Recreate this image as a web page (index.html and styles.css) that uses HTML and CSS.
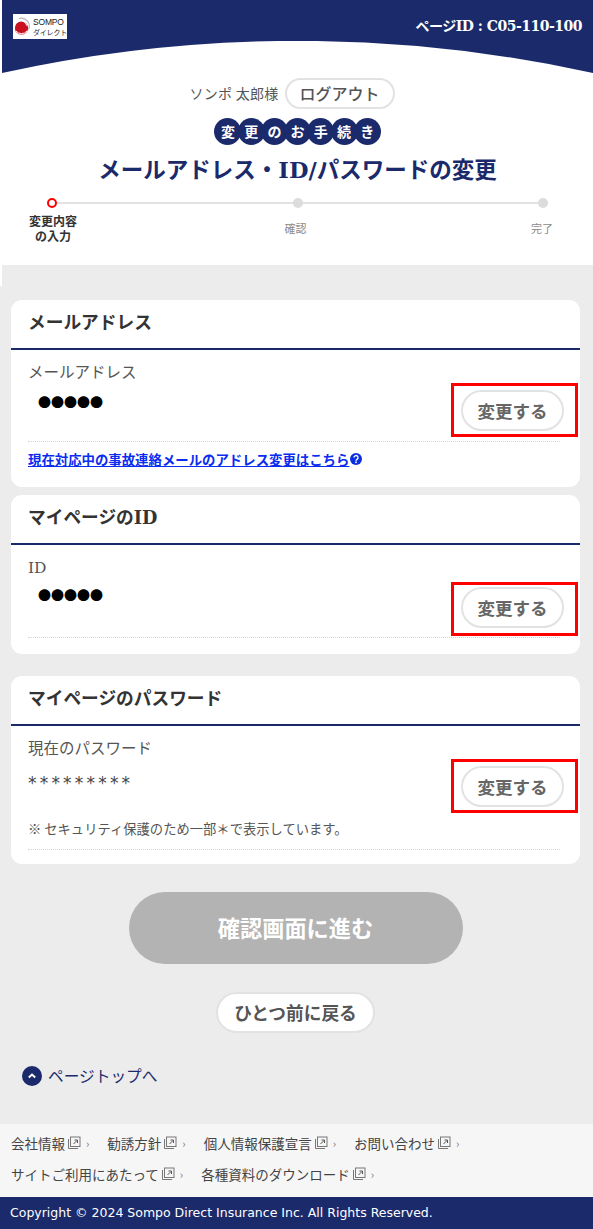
FILE: index.html
```html
<!DOCTYPE html>
<html lang="ja">
<head>
<meta charset="utf-8">
<title>メールアドレス・ID/パスワードの変更</title>
<link rel="stylesheet" href="styles.css">
</head>
<body>
<div class="top">
  <header class="header">
    <div class="header-row">
      <div class="logo">
        <svg class="logo-mark" viewBox="0 0 16 20" width="16" height="20" aria-hidden="true">
          <path d="M5 1.5a8 8 0 0 1 9.5 11" fill="none" stroke="#b5b5b5" stroke-width="1.2"/>
          <circle cx="7.5" cy="11" r="6.6" fill="#c8101e"/>
          <path d="M2 14a7 7 0 0 0 11 0" fill="none" stroke="#ffffff" stroke-width="1"/>
          <path d="M8 3.8a7 7 0 0 1 5 5" fill="none" stroke="#ffffff" stroke-width="1"/>
        </svg>
        <div class="logo-text"><span>SOMPO</span><span class="logo-jp">ダイレクト</span></div>
      </div>
      <div class="page-id">ページ<span class="latin">ID : C05-110-100</span></div>
    </div>
    <svg class="curve" viewBox="0 0 591 32" width="591" height="32" preserveAspectRatio="none" aria-hidden="true">
      <path d="M0 32A1375 1375 0 0 1 591 32Z" fill="#ffffff"/>
    </svg>
  </header>
  <div class="user-row">
    <span class="user-name">ソンポ 太郎様</span>
    <a class="pill-btn logout">ログアウト</a>
  </div>
  <div class="bubbles">
    <span>変</span><span>更</span><span>の</span><span>お</span><span>手</span><span>続</span><span>き</span>
  </div>
  <h1 class="title">メールアドレス・<span class="latin">ID/</span>パスワードの変更</h1>
  <div class="steps">
    <div class="step step-current"><i class="dot"></i><span class="step-label">変更内容<br>の入力</span></div>
    <div class="step step-mid"><i class="dot"></i><span class="step-label">確認</span></div>
    <div class="step step-last"><i class="dot"></i><span class="step-label">完了</span></div>
  </div>
  <div class="top-band"></div>
</div>

<main class="main">
  <section class="card card-mail">
    <h2 class="card-title">メールアドレス</h2>
    <div class="card-body">
      <div class="field">
        <div class="field-info">
          <div class="field-label">メールアドレス</div>
          <div class="masked">●●●●●</div>
        </div>
        <div class="highlight"><a class="pill-btn change">変更する</a></div>
      </div>
      <a class="contact-link">現在対応中の事故連絡メールのアドレス変更はこちら<svg class="help" viewBox="0 0 12 12" width="12" height="12" aria-hidden="true"><circle cx="6" cy="6" r="6" fill="#0b2fe0"/><path d="M4 4.6a2 2 0 1 1 3 1.7c-.7.4-1 .7-1 1.4" fill="none" stroke="#fff" stroke-width="1.4"/><rect x="5.2" y="8.5" width="1.6" height="1.6" fill="#fff"/></svg></a>
    </div>
  </section>

  <section class="card card-id">
    <h2 class="card-title">マイページの<span class="latin">ID</span></h2>
    <div class="card-body">
      <div class="field">
        <div class="field-info">
          <div class="field-label"><span class="latin">ID</span></div>
          <div class="masked">●●●●●</div>
        </div>
        <div class="highlight"><a class="pill-btn change">変更する</a></div>
      </div>
    </div>
  </section>

  <section class="card card-pass">
    <h2 class="card-title">マイページのパスワード</h2>
    <div class="card-body">
      <div class="field">
        <div class="field-info">
          <div class="field-label">現在のパスワード</div>
          <div class="stars">*********</div>
          <div class="note">※ セキュリティ保護のため一部＊で表示しています。</div>
        </div>
        <div class="highlight"><a class="pill-btn change">変更する</a></div>
      </div>
    </div>
  </section>

  <div class="actions">
    <a class="next-btn">確認画面に進む</a>
    <a class="pill-btn back">ひとつ前に戻る</a>
  </div>

  <a class="to-top">
    <svg viewBox="0 0 20 20" width="20" height="20" aria-hidden="true"><circle cx="10" cy="10" r="10" fill="#1b2a6b"/><path d="M6.8 11.6 10 8.6l3.2 3" fill="none" stroke="#fff" stroke-width="2"/></svg>
    ページトップへ
  </a>
</main>

<footer class="footer">
  <nav class="foot-links">
    <div class="foot-row">
      <a>会社情報<svg class="ext" viewBox="0 0 14 14" width="14" height="14" aria-hidden="true"><use href="#ext"/></svg><i class="chev">›</i></a>
      <a>勧誘方針<svg class="ext" viewBox="0 0 14 14" width="14" height="14" aria-hidden="true"><use href="#ext"/></svg><i class="chev">›</i></a>
      <a>個人情報保護宣言<svg class="ext" viewBox="0 0 14 14" width="14" height="14" aria-hidden="true"><use href="#ext"/></svg><i class="chev">›</i></a>
      <a>お問い合わせ<svg class="ext" viewBox="0 0 14 14" width="14" height="14" aria-hidden="true"><use href="#ext"/></svg><i class="chev">›</i></a>
    </div>
    <div class="foot-row">
      <a>サイトご利用にあたって<svg class="ext" viewBox="0 0 14 14" width="14" height="14" aria-hidden="true"><use href="#ext"/></svg><i class="chev">›</i></a>
      <a>各種資料のダウンロード<svg class="ext" viewBox="0 0 14 14" width="14" height="14" aria-hidden="true"><use href="#ext"/></svg><i class="chev">›</i></a>
    </div>
  </nav>
  <div class="copyright">Copyright © 2024 Sompo Direct Insurance Inc. All Rights Reserved.</div>
</footer>

<svg class="defs" width="0" height="0" aria-hidden="true">
  <symbol id="ext" viewBox="0 0 14 14">
    <path d="M1.5 3v9.5H11" fill="none" stroke="#777" stroke-width="1"/>
    <rect x="3.5" y="1" width="9.5" height="9.5" fill="none" stroke="#777" stroke-width="1"/>
    <path d="M6.5 8 10 4.5M7.5 4H10.5V7" fill="none" stroke="#555" stroke-width="1"/>
  </symbol>
</svg>
</body>
</html>
```

FILE: styles.css
```css
* { box-sizing: border-box; }
html, body { margin: 0; padding: 0; }
body {
  background: #ececec;
  color: #444;
  font-family: "Noto Sans CJK JP", "Noto Sans", sans-serif;
  width: 593px;
}
a { color: inherit; text-decoration: none; }
.defs { position: absolute; }
.latin { font-family: "DejaVu Serif", "Noto Sans CJK JP", serif; }

.top {
  background: #fff;
  padding: 0 0 0 2px;
  height: 286px;
  display: flex;
  flex-direction: column;
}
.top-band {
  margin-top: auto;
  height: 21px;
  background: #ececec;
}
.header {
  background: #1b2a6b;
  height: 73px;
  flex: none;
  display: flex;
  flex-direction: column;
  justify-content: space-between;
}
.header-row {
  display: flex;
  justify-content: space-between;
  padding: 14px 11px 0 11px;
}
.curve { display: block; flex: none; }
.logo {
  width: 54px;
  height: 25px;
  background: #fff;
  display: flex;
  align-items: center;
  gap: 3px;
  padding-left: 1px;
}
.logo-text {
  display: flex;
  flex-direction: column;
  font-family: "Liberation Sans", sans-serif;
  font-size: 8.5px;
  line-height: 10px;
  color: #222;
  letter-spacing: -0.2px;
}
.logo-jp { font-family: "Noto Sans CJK JP", sans-serif; font-size: 7px; }
.page-id {
  color: #fff;
  font-weight: 700;
  font-size: 14px;
  line-height: 22px;
  letter-spacing: -0.5px;
}

.user-row {
  display: flex;
  justify-content: center;
  align-items: center;
  gap: 6px;
  height: 32px;
  margin-top: 4px;
  padding-right: 11px;
}
.user-name { font-size: 14px; color: #555; letter-spacing: 0.3px; }
.pill-btn {
  display: inline-flex;
  align-items: center;
  justify-content: center;
  background: #fff;
  border: 2px solid #e2e2e2;
  border-radius: 999px;
  font-weight: 700;
  color: #555;
}
.logout { width: 110px; height: 31px; font-size: 16px; font-weight: 500; }

.bubbles {
  display: flex;
  justify-content: center;
  margin-top: 9px;
  padding-left: 4px;
}
.bubbles span {
  width: 27px;
  height: 27px;
  border-radius: 50%;
  background: #1b2a6b;
  color: #fff;
  font-size: 14px;
  font-weight: 700;
  line-height: 27px;
  text-align: center;
  margin-left: -3.8px;
}
.title {
  margin: 5px 0 0;
  text-align: center;
  color: #1b2a6b;
  font-size: 22.5px;
  line-height: 36px;
  font-weight: 700;
  white-space: nowrap;
}

.steps {
  position: relative;
  display: flex;
  justify-content: space-between;
  margin-top: 10px;
  padding: 0 20px 0 20px;
}
.steps::before {
  content: "";
  position: absolute;
  left: 50px;
  right: 50px;
  top: 4px;
  height: 2px;
  background: #e2e2e2;
}
.step {
  position: relative;
  width: 60px;
  display: flex;
  flex-direction: column;
  align-items: center;
}
.dot {
  width: 10px;
  height: 10px;
  border-radius: 50%;
  background: #dcdcdc;
}
.step-current .dot { background: #fff; border: 2px solid #f00; }
.step-label {
  height: 32px;
  margin-top: 4px;
  display: flex;
  align-items: center;
  text-align: center;
  font-size: 11px;
  line-height: 15px;
  color: #8a8a8a;
}
.step-current .step-label { color: #333; font-weight: 700; font-size: 12px; margin-left: 2px; }
.step-mid .step-label { margin-right: 4px; }
.step-last .step-label { margin-right: 2px; }

.main { padding: 0 13px 0 11px; }
.card {
  background: #fff;
  border-radius: 11px;
  overflow: hidden;
}
.card-mail { height: 187px; margin-top: 14px; }
.card-id { height: 159px; margin-top: 8px; }
.card-pass { height: 188px; margin-top: 22px; }
.card-title {
  margin: 0;
  height: 50px;
  padding: 0 17px;
  border-bottom: 2px solid #1b2a6b;
  font-size: 17.7px;
  line-height: 42px;
  font-weight: 700;
  color: #333;
}
.card-body { padding: 0 20px 0 17px; }
.field {
  display: flex;
  justify-content: space-between;
  height: 92px;
  border-bottom: 1px dotted #d4d4d4;
}
.card-id .field { height: 93px; }
.card-pass .field { height: 124px; }
.field-info { padding-top: 9px; }
.field-label { font-size: 15.5px; line-height: 24px; color: #555; }
.masked {
  font-size: 13px;
  line-height: 22px;
  color: #000;
  padding-left: 10px;
  margin-top: 8px;
}
.card-id .masked { margin-top: 4px; }
.stars {
  font-family: "DejaVu Sans", sans-serif;
  font-size: 17px;
  line-height: 26px;
  margin-top: 11px;
  color: #444;
  letter-spacing: 3.2px;
}
.note { font-size: 13.3px; line-height: 18px; margin-top: 24px; color: #555; white-space: nowrap; }
.highlight {
  flex: none;
  align-self: flex-start;
  width: 127px;
  height: 54px;
  margin-top: 33px;
  margin-right: -18px;
  border: 3px solid #f00;
  display: flex;
  align-items: center;
  padding-left: 7px;
}
.card-id .highlight { margin-top: 37px; align-items: flex-start; padding-top: 2px; }
.card-pass .highlight { margin-top: 33px; }
.change { width: 103px; height: 41px; font-size: 17.5px; color: #666; }
.contact-link {
  display: flex;
  align-items: center;
  margin-top: 7px;
  color: #0a2cf0;
  font-size: 13.4px;
  font-weight: 700;
  line-height: 20px;
  text-decoration: underline;
  white-space: nowrap;
}
.help { margin-left: 1px; }

.actions {
  display: flex;
  flex-direction: column;
  align-items: center;
  margin-top: 28px;
}
.next-btn {
  width: 334px;
  height: 72px;
  padding-bottom: 2px;
  border-radius: 999px;
  background: #b3b3b3;
  color: #fff;
  font-size: 22.2px;
  font-weight: 700;
  display: flex;
  align-items: center;
  justify-content: center;
}
.back { width: 159px; height: 41px; font-size: 17.7px; margin-top: 28px; padding-bottom: 1px; }

.to-top {
  display: flex;
  align-items: center;
  gap: 6px;
  margin: 32px 0 0 11px;
  color: #1b2a6b;
  font-size: 15.7px;
  line-height: 22px;
}

.footer { margin-top: 37px; }
.foot-links {
  background: #f6f6f6;
  height: 73px;
  padding: 3px 0 0 11px;
}
.foot-row {
  display: flex;
  gap: 18px;
  height: 31px;
  align-items: center;
  font-size: 13.5px;
  color: #444;
}
.foot-row a { display: flex; align-items: center; }
.ext { margin-left: 2px; }
.chev { font-style: normal; font-size: 11px; margin-left: 5px; color: #777; }
.copyright {
  background: #1b2a6b;
  color: #fff;
  height: 32px;
  padding-left: 10px;
  font-family: "DejaVu Sans", sans-serif;
  font-size: 12.5px;
  line-height: 32px;
  white-space: nowrap;
}
```
